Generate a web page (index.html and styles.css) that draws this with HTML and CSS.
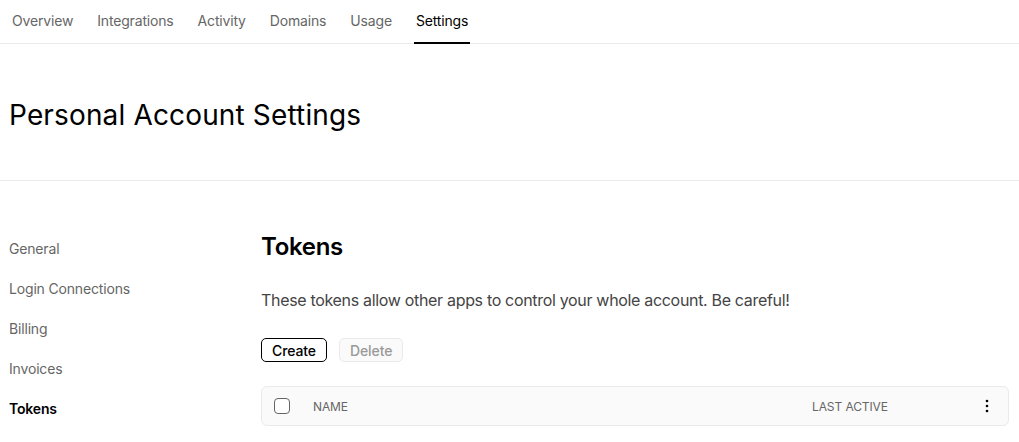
FILE: index.html
```html
<!DOCTYPE html>
<html lang="en">
<head>
<meta charset="utf-8">
<title>Personal Account Settings</title>
<link rel="stylesheet" href="styles.css">
</head>
<body>
<nav class="tabs">
  <a class="tab">Overview</a>
  <a class="tab">Integrations</a>
  <a class="tab">Activity</a>
  <a class="tab">Domains</a>
  <a class="tab">Usage</a>
  <a class="tab active">Settings</a>
</nav>
<header class="page-head">
  <h1>Personal Account Settings</h1>
</header>
<div class="layout">
  <aside class="sidebar">
    <a class="side-item">General</a>
    <a class="side-item">Login Connections</a>
    <a class="side-item">Billing</a>
    <a class="side-item">Invoices</a>
    <a class="side-item active">Tokens</a>
  </aside>
  <main class="main">
    <h2>Tokens</h2>
    <p class="desc">These tokens allow other apps to control your whole account. Be careful!</p>
    <div class="actions">
      <button class="btn">Create</button>
      <button class="btn disabled">Delete</button>
    </div>
    <div class="table-head">
      <span class="checkbox"></span>
      <span class="col-name">NAME</span>
      <span class="col-active">LAST ACTIVE</span>
      <span class="kebab">
        <svg width="4" height="14" viewBox="0 0 4 14"><circle cx="2" cy="2" r="1.3" fill="#000"/><circle cx="2" cy="7" r="1.3" fill="#000"/><circle cx="2" cy="12" r="1.3" fill="#000"/></svg>
      </span>
    </div>
  </main>
</div>
</body>
</html>
```
FILE: styles.css
```css
* { box-sizing: border-box; }
html, body { margin: 0; padding: 0; background: #fff; }
body {
  font-family: Inter, "Noto Sans", sans-serif;
  color: #000;
  -webkit-font-smoothing: antialiased;
}
.tabs {
  display: flex;
  height: 44px;
  border-bottom: 1px solid #eaeaea;
}
.tab {
  margin: 0 10px;
  padding: 0 2px;
  font-size: 14px;
  letter-spacing: -0.17px;
  line-height: 42px;
  color: #666;
  border-bottom: 2px solid transparent;
  height: 44px;
}
.tab.active {
  color: #000;
  border-bottom-color: #000;
}
.page-head {
  height: 137px;
  padding: 0 9px;
  display: flex;
  align-items: center;
  border-bottom: 1px solid #eaeaea;
}
h1 {
  margin: 6px 0 0;
  font-size: 28px;
  font-weight: 400;
  letter-spacing: 0.15px;
}
.layout {
  display: flex;
  padding: 48px 10px 0 9px;
}
.sidebar {
  width: 252px;
  flex: none;
  display: flex;
  flex-direction: column;
}
.side-item {
  font-size: 14px;
  letter-spacing: -0.17px;
  line-height: 40px;
  color: #666;
}
.side-item.active {
  color: #000;
  font-weight: 600;
}
.main {
  flex: 1;
}
h2 {
  margin: -2px 0 0;
  font-size: 24px;
  font-weight: 600;
  line-height: 40px;
  letter-spacing: -0.3px;
}
.desc {
  margin: 21px 0 0;
  font-size: 16px;
  letter-spacing: -0.32px;
  line-height: 24px;
  color: #444;
}
.actions {
  display: flex;
  gap: 12px;
  margin-top: 26px;
}
.btn {
  font-family: inherit;
  height: 24px;
  padding: 0 10px;
  font-size: 14px;
  font-weight: 500;
  letter-spacing: -0.1px;
  border: 1px solid #000;
  border-radius: 5px;
  background: #fff;
  color: #000;
}
.btn.disabled {
  border-color: #eaeaea;
  background: #fafafa;
  color: #999;
}
.table-head {
  display: flex;
  align-items: center;
  height: 40px;
  margin-top: 24px;
  background: #fafafa;
  border: 1px solid #eaeaea;
  border-radius: 6px;
  padding: 0 10px 0 12px;
}
.checkbox {
  width: 16px;
  height: 16px;
  border: 1px solid #666;
  border-radius: 4px;
  background: #fff;
  flex: none;
}
.col-name {
  margin-left: 23px;
  font-size: 12px;
  letter-spacing: -0.1px;
  color: #666;
  flex: 1;
}
.col-active {
  font-size: 12px;
  letter-spacing: -0.1px;
  color: #666;
  width: 164px;
}
.kebab {
  display: flex;
  width: 22px;
  justify-content: center;
}
```
